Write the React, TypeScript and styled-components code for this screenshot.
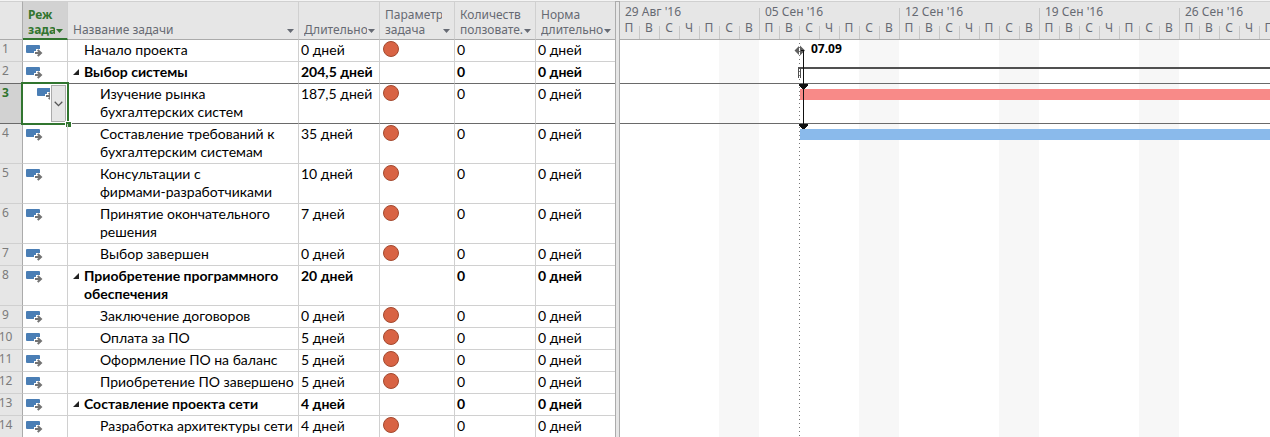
import React, { useEffect, useState } from "react";
import styled, { createGlobalStyle } from "styled-components";

const color = {
  chrome: "#e6e6e6",
  selectedChrome: "#d2d2d2",
  line: "#d0d0d0",
  edge: "#ababab",
  green: "#31752f",
  muted: "#666a73",
  selectLine: "#6a6a6a",
};

const HEADER_FONT = `"Noto Sans", "Open Sans", sans-serif`;
const CELL_FONT = `Lato, "Open Sans", sans-serif`;

const GlobalStyle = createGlobalStyle`
  *, *::before, *::after { box-sizing: border-box; }
  body { margin: 0; background: #fff; }
`;

const Screen = styled.main`
  display: flex;
  height: 100vh;
  overflow: hidden;
  border-top: 1px solid #f4f4f4;
  font-family: ${CELL_FONT};
  color: #000;
`;

const Sheet = styled.table`
  flex: none;
  align-self: flex-start;
  width: 615px;
  table-layout: fixed;
  border-collapse: separate;
  border-spacing: 0;
`;

const HeadCell = styled.th<{ $active?: boolean }>`
  height: 39px;
  padding: 5px 3px ${(p) => (p.$active ? 1 : 2)}px 5px;
  vertical-align: bottom;
  text-align: left;
  background: ${(p) => (p.$active ? color.selectedChrome : color.chrome)};
  border-top: 1px solid ${color.line};
  border-right: 1px solid ${color.line};
  border-bottom: ${(p) => (p.$active ? `2px solid ${color.green}` : `1px solid ${color.edge}`)};
  color: ${(p) => (p.$active ? color.green : color.muted)};
  font: ${(p) => (p.$active ? 700 : 400)} 12px/15px ${HEADER_FONT};
  &:first-child { border-right-color: ${color.edge}; }
  &:last-child { border-right: 0; }
`;

const HeadInner = styled.div`
  display: flex;
  align-items: flex-end;
`;

const HeadText = styled.span`
  flex: 1;
  min-width: 0;
  overflow: hidden;
  white-space: pre;
`;

const FilterButton = styled.button`
  flex: none;
  display: flex;
  width: 9px;
  height: 12px;
  padding: 4px 0 0 1px;
  border: 0;
  background: none;
  color: inherit;
`;

const Row = styled.tr<{ $selected: boolean; $beforeSelected: boolean }>`
  & > * {
    border-bottom: 1px solid
      ${(p) => (p.$selected || p.$beforeSelected ? color.selectLine : color.line)};
  }
`;

const NumberCell = styled.th<{ $selected: boolean }>`
  padding: 0;
  vertical-align: top;
  background: ${(p) => (p.$selected ? color.selectedChrome : color.chrome)};
  border-right: 1px solid ${color.edge};
  color: ${(p) => (p.$selected ? color.green : "#7b7b7b")};
  font: ${(p) => (p.$selected ? 700 : 400)} 12px/18px ${HEADER_FONT};
`;

const NumberText = styled.span`
  display: flex;
  justify-content: center;
  width: 11px;
`;

const Cell = styled.td<{ $bold?: boolean }>`
  padding: 1px 2px 2px;
  vertical-align: top;
  border-right: 1px solid ${color.line};
  font-size: 14px;
  line-height: 18px;
  font-weight: ${(p) => (p.$bold ? 700 : 400)};
  white-space: pre;
  &:last-child { border-right: 0; }
`;

const ModeCell = styled(Cell)`
  position: relative;
  padding: 5px 0 0 3px;
  line-height: 0;
`;

const FlagCell = styled(Cell)`
  padding: 0 3px;
  line-height: 0;
`;

const NameCell = styled(Cell)<{ $level: number }>`
  padding-left: ${(p) => p.$level * 16}px;
`;

const NameInner = styled.div`
  display: flex;
  align-items: flex-start;
`;

const ToggleButton = styled.button`
  flex: none;
  display: flex;
  align-items: flex-start;
  width: 16px;
  height: 18px;
  padding: 6px 0 0 5px;
  border: 0;
  background: none;
`;

const Selection = styled.div`
  position: absolute;
  inset: -2px;
  display: flex;
  justify-content: space-between;
  padding: 1px 1px 1px 14px;
  border: 2px solid ${color.green};
  &::after {
    content: "";
    position: absolute;
    right: -5px;
    bottom: -5px;
    width: 7px;
    height: 7px;
    border: 1px solid #fff;
    background: ${color.green};
  }
`;

const SelectionIcon = styled.span`
  width: 13px;
  padding-top: 3px;
  overflow: hidden;
`;

const DropButton = styled.button`
  display: flex;
  align-items: center;
  justify-content: center;
  flex: none;
  width: 15px;
  padding: 0;
  border: 1px solid ${color.edge};
  background: ${color.chrome};
`;

const Splitter = styled.div`
  flex: none;
  width: 5px;
  border: 1px solid ${color.edge};
  border-width: 1px 1px 0;
  background: ${color.chrome};
`;

const Gantt = styled.section`
  flex: 1;
  min-width: 0;
  display: flex;
  flex-direction: column;
  overflow: hidden;
`;

const Timescale = styled.header`
  flex: none;
  display: flex;
  height: 39px;
  padding-top: 2px;
  overflow: hidden;
  background: ${color.chrome};
  border-top: 1px solid ${color.line};
  border-bottom: 1px solid ${color.edge};
  color: ${color.muted};
  font: 12px/16px ${HEADER_FONT};
`;

const Week = styled.div`
  flex: none;
  width: 140px;
  display: flex;
  flex-direction: column;
  background: linear-gradient(#c8c8c8, #c8c8c8) right 0 top 4px / 1px 100% no-repeat;
`;

const WeekLabel = styled.span`
  padding-left: 5px;
`;

const Days = styled.div`
  display: flex;
  flex: 1;
`;

const Day = styled.span`
  width: 20px;
  padding-right: 2px;
  text-align: center;
  &:not(:last-child) {
    background: linear-gradient(#c8c8c8, #c8c8c8) right 0 top 6px / 1px 100% no-repeat;
  }
`;

const Chart = styled.svg`
  display: block;
  width: 100%;
  flex: 1;
  min-height: 0;
`;

const ChartLabel = styled.text`
  font: 700 12px ${HEADER_FONT};
`;

type Task = {
  name: string;
  duration: string;
  level: number;
  summary?: boolean;
};

const tasks: Task[] = [
  { name: "Начало проекта", duration: "0 дней", level: 1 },
  { name: "Выбор системы", duration: "204,5 дней", level: 0, summary: true },
  { name: "Изучение рынка\nбухгалтерских систем", duration: "187,5 дней", level: 2 },
  { name: "Составление требований к\nбухгалтерским системам", duration: "35 дней", level: 2 },
  { name: "Консультации с\nфирмами-разработчиками", duration: "10 дней", level: 2 },
  { name: "Принятие окончательного\nрешения", duration: "7 дней", level: 2 },
  { name: "Выбор завершен", duration: "0 дней", level: 2 },
  { name: "Приобретение программного\nобеспечения", duration: "20 дней", level: 0, summary: true },
  { name: "Заключение договоров", duration: "0 дней", level: 2 },
  { name: "Оплата за ПО", duration: "5 дней", level: 2 },
  { name: "Оформление ПО на баланс", duration: "5 дней", level: 2 },
  { name: "Приобретение ПО завершено", duration: "5 дней", level: 2 },
  { name: "Составление проекта сети", duration: "4 дней", level: 0, summary: true },
  { name: "Разработка архитектуры сети", duration: "4 дней", level: 2 },
];

const SELECTED = 2;

const columns = [
  { title: "Реж\nзада", width: 45, active: true },
  { title: "Название задачи", width: 231 },
  { title: "Длительно", width: 81 },
  { title: "Параметр\nзадача", width: 75 },
  { title: "Количеств\nползовате.", width: 81 },
  { title: "Норма\nдлительно", width: 79 },
];

const SHEET_WIDTH = 620;
const WEEK_WIDTH = 140;
const days = ["П", "В", "С", "Ч", "П", "С", "В"];
const months = ["Янв", "Фев", "Мар", "Апр", "Май", "Июн", "Июл", "Авг", "Сен", "Окт", "Ноя", "Дек"];

const weekLabel = (index: number) => {
  const d = new Date(2016, 7, 29 + index * 7);
  return `${String(d.getDate()).padStart(2, "0")} ${months[d.getMonth()]} '${d.getFullYear() % 100}`;
};

const countWeeks = () => Math.max(1, Math.ceil((window.innerWidth - SHEET_WIDTH) / WEEK_WIDTH));

function useWeeks() {
  const [count, setCount] = useState(countWeeks);
  useEffect(() => {
    const update = () => setCount(countWeeks());
    window.addEventListener("resize", update);
    return () => window.removeEventListener("resize", update);
  }, []);
  return Array.from({ length: count }, (_, i) => weekLabel(i));
}

const ModeIcon = () => (
  <svg width="17" height="12" viewBox="0 0 17 12" aria-hidden="true">
    <path d="M1 0h12q1 0 1 1v3h-4v2H8v2H1q-1 0-1-1V1q0-1 1-1z" fill="#4a7eb5" />
    <path d="M9 8h6M11.700 4.900L15 8l-3.300 3.100" fill="none" stroke="#737373" strokeWidth="2" />
  </svg>
);

const FlagIcon = () => (
  <svg width="16" height="17" viewBox="0 0 16 17" role="img" aria-label="Красный индикатор">
    <circle cx="8" cy="9" r="7.5" fill="#d86344" stroke="#a3492f" />
  </svg>
);

const Caret = () => (
  <svg width="7" height="4" viewBox="0 0 7 4" aria-hidden="true">
    <path d="M0 0h7L3.500 4z" fill="currentColor" />
  </svg>
);

function TaskSheet() {
  return (
    <Sheet>
      <colgroup>
        <col width={23} />
        {columns.map((c) => (
          <col key={c.title} width={c.width} />
        ))}
      </colgroup>
      <thead>
        <tr>
          <HeadCell aria-label="Номер" />
          {columns.map((c) => (
            <HeadCell key={c.title} $active={c.active}>
              <HeadInner>
                <HeadText>{c.title}</HeadText>
                <FilterButton aria-label="Фильтр">
                  <Caret />
                </FilterButton>
              </HeadInner>
            </HeadCell>
          ))}
        </tr>
      </thead>
      <tbody>
        {tasks.map((t, i) => (
          <Row key={t.name} $selected={i === SELECTED} $beforeSelected={i === SELECTED - 1}>
            <NumberCell $selected={i === SELECTED}>
              <NumberText>{i + 1}</NumberText>
            </NumberCell>
            <ModeCell>
              {i === SELECTED ? (
                <Selection>
                  <SelectionIcon>
                    <ModeIcon />
                  </SelectionIcon>
                  <DropButton aria-label="Выбрать режим">
                    <svg width="9" height="6" viewBox="0 0 9 6" aria-hidden="true">
                      <path d="M.7.8l3.800 3.800L8.300.8" fill="none" stroke="#555" strokeWidth="1.3" />
                    </svg>
                  </DropButton>
                </Selection>
              ) : (
                <ModeIcon />
              )}
            </ModeCell>
            <NameCell $level={t.level} $bold={t.summary}>
              <NameInner>
                {t.summary && (
                  <ToggleButton aria-label="Свернуть">
                    <svg width="6" height="6" viewBox="0 0 6 6" aria-hidden="true">
                      <path d="M6 0v6H0z" fill="#222" />
                    </svg>
                  </ToggleButton>
                )}
                <span>{t.name}</span>
              </NameInner>
            </NameCell>
            <Cell $bold={t.summary}>{t.duration}</Cell>
            <FlagCell>{!t.summary && <FlagIcon />}</FlagCell>
            <Cell $bold={t.summary}>0</Cell>
            <Cell $bold={t.summary}>0 дней</Cell>
          </Row>
        ))}
      </tbody>
    </Sheet>
  );
}

function GanttChart() {
  const weeks = useWeeks();
  return (
    <Gantt>
      <Timescale>
        {weeks.map((w) => (
          <Week key={w}>
            <WeekLabel>{w}</WeekLabel>
            <Days>
              {days.map((d, i) => (
                <Day key={i}>{d}</Day>
              ))}
            </Days>
          </Week>
        ))}
      </Timescale>
      <Chart shapeRendering="crispEdges">
        <defs>
          <pattern id="weekend" width="140" height="20" patternUnits="userSpaceOnUse">
            <rect x="99" width="40" height="20" fill="#f7f7f7" />
          </pattern>
        </defs>
        <rect width="100%" height="100%" fill="url(#weekend)" />
        <rect y="43" width="100%" height="1" fill={color.selectLine} />
        <rect y="83" width="100%" height="1" fill={color.selectLine} />
        <line x1="179.5" y1="3" x2="179.5" y2="100%" stroke="#777" strokeDasharray="1 3" />
        <rect x="180" y="49" width="100%" height="11" fill="#f88a88" />
        <rect x="180" y="89" width="100%" height="11" fill="#8abaeb" />
        <rect x="179" y="27" width="100%" height="2" fill="#505050" />
        <path d="M178.500 27v11M180.500 27v11" stroke="#505050" />
        <path d="M179 6v9l-4.500-4.500zM180 5.500v10l5-5z" fill="#606060" shapeRendering="auto" />
        <path d="M181 10.500h2.500V88" fill="none" stroke="#111" />
        <path d="M179 44h9v1l-3 4h-3l-3-4zM179 84h9v1l-3 4h-3l-3-4z" fill="#111" />
        <ChartLabel x="191" y="13">
          07.09
        </ChartLabel>
      </Chart>
    </Gantt>
  );
}

export default function App() {
  return (
    <Screen>
      <GlobalStyle />
      <TaskSheet />
      <Splitter />
      <GanttChart />
    </Screen>
  );
}
